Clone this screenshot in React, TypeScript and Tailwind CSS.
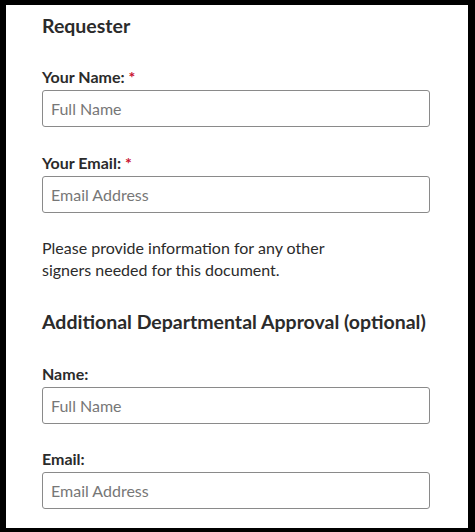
export default function App() {
  const font = { fontFamily: "Lato, 'Open Sans', sans-serif" };
  return (
    <div className="h-[532px] w-[475px] bg-black pt-[5px] pl-[6px] pr-[7px] pb-[4px]" style={font}>
      <div className="h-full bg-white pl-[36px] pr-[38px] text-[#2b2b2b]">
        <h2 className="pt-[8px] text-[19.5px] font-bold leading-[26px]">Requester</h2>

        <Field label="Your Name:" required placeholder="Full Name" className="mt-[27px]" />
        <Field label="Your Email:" required placeholder="Email Address" className="mt-[25px]" />

        <p className="mt-[24px] w-[330px] text-[16px] leading-[22px]">
          Please provide information for any other signers needed for this document.
        </p>

        <h2 className="mt-[28px] text-[19.5px] font-bold leading-[26px]">
          Additional Departmental Approval (optional)
        </h2>

        <Field label="Name:" placeholder="Full Name" className="mt-[28px]" />
        <Field label="Email:" placeholder="Email Address" className="mt-[24px]" />
      </div>
    </div>
  );
}

function Field({
  label,
  placeholder,
  required,
  className,
}: {
  label: string;
  placeholder: string;
  required?: boolean;
  className?: string;
}) {
  return (
    <div className={className}>
      <label className="block text-[16px] font-bold leading-[22px]">
        {label} {required && <span className="text-[#c8102e]">*</span>}
      </label>
      <input
        placeholder={placeholder}
        className="mt-[2px] block h-[37px] w-[388px] rounded-[3px] border border-[#8a8a8a] px-[8px] text-[16px] text-[#2b2b2b] placeholder:text-[#777] outline-none"
      />
    </div>
  );
}
